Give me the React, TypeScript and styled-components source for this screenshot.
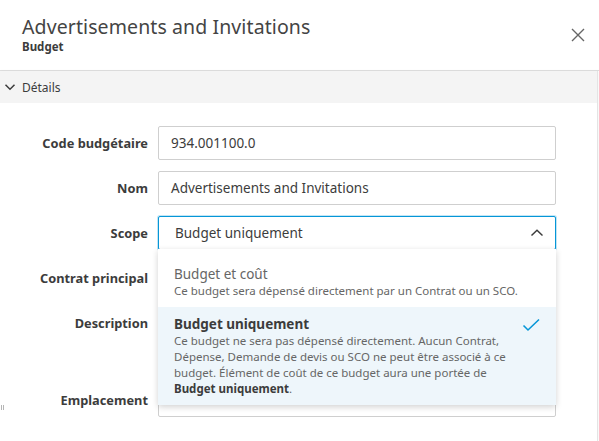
import React from "react";
import styled, { createGlobalStyle } from "styled-components";

const GlobalStyle = createGlobalStyle`
  html, body {
    margin: 0;
    padding: 0;
    background: #ffffff;
  }
  body {
    font-family: "Noto Sans", "Open Sans", Arial, sans-serif;
    color: #3c3c3c;
  }
`;

const Page = styled.div`
  position: relative;
  width: 599px;
  height: 441px;
  overflow: hidden;
  background: #fff;
`;

const Header = styled.header`
  height: 71px;
  padding: 14px 0 0 22px;
  box-sizing: border-box;
  border-bottom: 1px solid #dedede;
  display: flex;
  justify-content: space-between;
`;

const TitleBlock = styled.div`
  display: flex;
  flex-direction: column;
`;

const Title = styled.h1`
  margin: 0;
  font-size: 19.5px;
  line-height: 26px;
  font-weight: 400;
  color: #444;
  letter-spacing: 0.1px;
`;

const Subtitle = styled.div`
  font-size: 11.5px;
  font-weight: 700;
  line-height: 14px;
  color: #3c3c3c;
`;

const CloseButton = styled.button`
  border: 0;
  background: transparent;
  padding: 0;
  width: 14px;
  height: 14px;
  margin: 14px 14px 0 0;
  cursor: pointer;
  display: flex;
`;

const Body = styled.div`
  width: 597px;
  height: 370px;
  border-right: 1px solid #e4e4e4;
  box-shadow: 1px 0 3px rgba(0, 0, 0, 0.04);
`;

const SectionBar = styled.div`
  height: 32px;
  background: #f4f4f4;
  display: flex;
  align-items: center;
  gap: 6px;
  padding-left: 4px;
  font-size: 12px;
  color: #3c3c3c;
`;

const Form = styled.div`
  display: grid;
  grid-template-columns: 148px 398px;
  column-gap: 10px;
  row-gap: 11px;
  padding-top: 23px;
`;

const Label = styled.label<{ $top?: boolean }>`
  font-size: 12.8px;
  font-weight: 700;
  color: #3c3c3c;
  text-align: right;
  align-self: ${(p) => (p.$top ? "start" : "center")};
  padding-top: ${(p) => (p.$top ? "8px" : "0")};
  white-space: nowrap;
`;

const Field = styled.div<{ $tall?: boolean }>`
  position: relative;
  height: ${(p) => (p.$tall ? "66px" : "34px")};
  box-sizing: border-box;
  border: 1px solid #cfcfcf;
  border-radius: 2px;
  background: #fff;
  display: flex;
  align-items: center;
  padding: 0 12px;
  font-size: 13.5px;
  color: #3c3c3c;
`;

const SelectField = styled(Field)`
  border-color: #0696d7;
  box-shadow: 0 0 0 1px rgba(6, 150, 215, 0.25);
  padding: 0 11px 0 16px;
  justify-content: space-between;
  z-index: 2;
`;

const Menu = styled.div`
  position: absolute;
  top: 100%;
  left: -1px;
  right: -1px;
  background: #fff;
  box-shadow: 0 2px 6px rgba(0, 0, 0, 0.18);
  border-radius: 0 0 2px 2px;
`;

const Option = styled.div<{ $selected?: boolean }>`
  display: flex;
  justify-content: space-between;
  padding: ${(p) => (p.$selected ? "8px 16px 8px 16px" : "16px 16px 8px 16px")};
  background: ${(p) => (p.$selected ? "#eef6fb" : "#fff")};
`;

const OptionTitle = styled.div<{ $selected?: boolean }>`
  font-size: 13.5px;
  line-height: 18px;
  font-weight: ${(p) => (p.$selected ? 700 : 400)};
  color: ${(p) => (p.$selected ? "#3c3c3c" : "#666")};
`;

const OptionDesc = styled.div`
  font-size: 11.5px;
  line-height: 16px;
  color: #666;
  white-space: nowrap;
  b {
    color: #3c3c3c;
  }
`;

const Check = styled.div`
  padding: 3px 0 0 0;
  width: 18px;
  display: flex;
`;

const Grip = styled.div`
  position: absolute;
  left: 1px;
  top: 405px;
  display: flex;
  gap: 1px;
  span {
    width: 1px;
    height: 5px;
    background: #b5b5b5;
  }
`;

const ChevronDown = () => (
  <svg width="12" height="12" viewBox="0 0 12 12">
    <path d="M1.5 3.8 6 8.2l4.5-4.4" fill="none" stroke="#3c3c3c" strokeWidth="1.5" />
  </svg>
);

const ChevronUp = () => (
  <svg width="14" height="10" viewBox="0 0 14 10">
    <path d="M1.5 7.5 7 2.3l5.5 5.2" fill="none" stroke="#3c3c3c" strokeWidth="1.5" />
  </svg>
);

const CloseIcon = () => (
  <svg width="14" height="14" viewBox="0 0 14 14">
    <path d="M1 1l12 12M13 1 1 13" fill="none" stroke="#666" strokeWidth="1.4" />
  </svg>
);

const CheckIcon = () => (
  <svg width="18" height="14" viewBox="0 0 18 14">
    <path d="M1.5 7.5 6 12 17 1.5" fill="none" stroke="#0696d7" strokeWidth="1.6" />
  </svg>
);

export default function App(): React.ReactElement {
  return (
    <Page>
      <GlobalStyle />
      <Header>
        <TitleBlock>
          <Title>Advertisements and Invitations</Title>
          <Subtitle>Budget</Subtitle>
        </TitleBlock>
        <CloseButton aria-label="Fermer">
          <CloseIcon />
        </CloseButton>
      </Header>
      <Body>
        <SectionBar>
          <ChevronDown />
          Détails
        </SectionBar>
        <Form>
          <Label>Code budgétaire</Label>
          <Field>934.001100.0</Field>

          <Label>Nom</Label>
          <Field>Advertisements and Invitations</Field>

          <Label>Scope</Label>
          <SelectField>
            Budget uniquement
            <ChevronUp />
            <Menu>
              <Option>
                <div>
                  <OptionTitle>Budget et coût</OptionTitle>
                  <OptionDesc>Ce budget sera dépensé directement par un Contrat ou un SCO.</OptionDesc>
                </div>
              </Option>
              <Option $selected>
                <div>
                  <OptionTitle $selected>Budget uniquement</OptionTitle>
                  <OptionDesc>
                    Ce budget ne sera pas dépensé directement. Aucun Contrat,
                    <br />
                    Dépense, Demande de devis ou SCO ne peut être associé à ce
                    <br />
                    budget. Élément de coût de ce budget aura une portée de
                    <br />
                    <b>Budget uniquement</b>.
                  </OptionDesc>
                </div>
                <Check>
                  <CheckIcon />
                </Check>
              </Option>
            </Menu>
          </SelectField>

          <Label>Contrat principal</Label>
          <Field />

          <Label $top>Description</Label>
          <Field $tall />

          <Label>Emplacement</Label>
          <Field />
        </Form>
      </Body>
      <Grip>
        <span />
        <span />
      </Grip>
    </Page>
  );
}
